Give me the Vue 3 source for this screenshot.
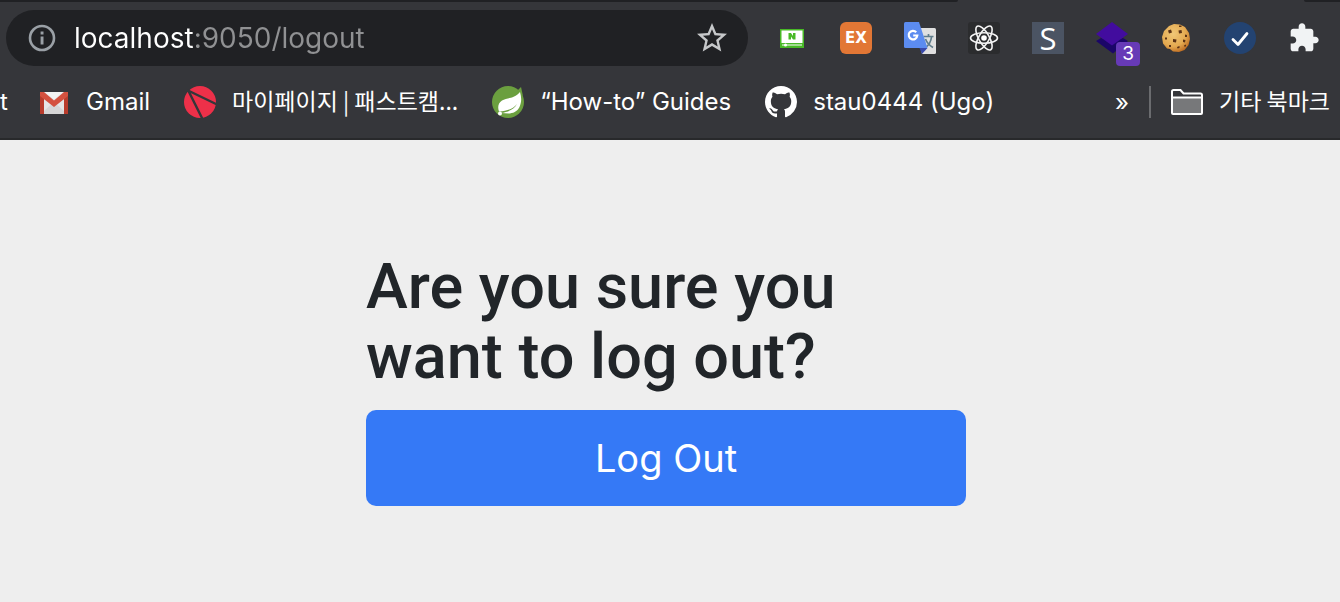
<script setup>
import { ref } from 'vue'

const address = ref('localhost:9050/logout')
</script>

<template>
  <div class="window">
    <header class="chrome">
      <div class="tabstrip"><span class="tabs-left"></span><span class="tabs-right"></span></div>

      <div class="toolbar">
        <div class="omnibox">
          <button class="icon-button" type="button" aria-label="Site information">
            <svg width="28" height="28" viewBox="0 0 28 28">
              <circle cx="14" cy="14" r="12" fill="none" stroke="#9aa0a6" stroke-width="2.6" />
              <path d="M12.6 7.5h2.9v3h-2.9zM12.6 12.5h2.9v8h-2.9z" fill="#9aa0a6" />
            </svg>
          </button>
          <input v-model="address" class="address" type="text" aria-label="Address" spellcheck="false" />
          <button class="icon-button" type="button" aria-label="Bookmark this page">
            <svg width="36" height="36" viewBox="0 0 24 24">
              <path fill="#c6c8ca" d="M22 9.24l-7.19-.62L12 2 9.19 8.63 2 9.24l5.46 4.73L5.82 21 12 17.27 18.18 21l-1.63-7.03L22 9.24zM12 15.4l-3.76 2.27 1-4.28-3.32-2.88 4.38-.38L12 6.1l1.71 4.04 4.38.38-3.32 2.88 1 4.28L12 15.4z" />
            </svg>
          </button>
        </div>

        <div class="extensions">
          <button class="icon-button" type="button" aria-label="Video extension">
            <svg width="32" height="32" viewBox="0 0 32 32">
              <path fill="#48b926" d="M4 7h24v19H4z" />
              <path fill="#fff" d="M5.500 8.500h21v12.500h-21zM6 22.500h20v1H6z" />
              <path fill="#48b926" d="M12.500 11h2.500l2 3v-3h2.500v6.500h-2.500l-2-3v3h-2.500z" />
              <circle cx="9.500" cy="23" r="1.500" fill="#fff" />
            </svg>
          </button>
          <button class="icon-button ex" type="button">EX</button>
          <button class="icon-button" type="button" aria-label="Translate">
            <svg width="32" height="32" viewBox="0 0 32 32">
              <path fill="#e0e0e0" d="M12 6h18.500q1.500 0 1.500 1.500v23q0 1.500-1.500 1.500H18z" />
              <path fill="none" stroke="#607d8b" stroke-width="1.700" d="M19.500 14.500h10M24.500 12v2.500M21 26c3.500-2.500 6-6 6.500-11M21.500 17c1.500 4 4 6.500 7.500 8.500" />
              <path fill="#3949ab" d="M15.500 26h8L18 32z" />
              <path fill="#5c8cf0" d="M1.500 0H15l8.500 26h-22Q0 26 0 24.500v-23Q0 0 1.500 0z" />
              <path fill="none" stroke="#fff" stroke-width="2.200" d="M12.200 10.200A4.300 4.300 0 1 0 13.300 13.500H9.200" />
            </svg>
          </button>
          <button class="icon-button" type="button" aria-label="React developer tools">
            <svg width="32" height="32" viewBox="0 0 32 32">
              <rect width="32" height="32" rx="3" fill="#2b2c2e" />
              <g fill="none" stroke="#f4f4f4" stroke-width="1.600">
                <ellipse cx="16" cy="16" rx="13.500" ry="5.200" />
                <ellipse cx="16" cy="16" rx="13.500" ry="5.200" transform="rotate(60 16 16)" />
                <ellipse cx="16" cy="16" rx="13.500" ry="5.200" transform="rotate(120 16 16)" />
              </g>
              <circle cx="16" cy="16" r="2.800" fill="#fff" />
            </svg>
          </button>
          <button class="icon-button s-tile" type="button">S</button>
          <button class="icon-button badge-host" type="button" aria-label="Layers, 3 items">
            <svg width="32" height="32" viewBox="0 0 32 32">
              <path fill="#1b0668" d="M0 19l5-3 11 4 11-4 5 3-15 12.500z" />
              <path fill="#420c9e" d="M16 0l16 12-16 11.500L0 12z" />
            </svg>
            <span class="badge">3</span>
          </button>
          <button class="icon-button" type="button" aria-label="Cookies">
            <svg width="32" height="32" viewBox="0 0 32 32">
              <defs>
                <radialGradient id="cookie" cx=".4" cy=".35" r=".7">
                  <stop offset="0" stop-color="#f0c777" />
                  <stop offset=".65" stop-color="#e4a950" />
                  <stop offset="1" stop-color="#bd6a20" />
                </radialGradient>
              </defs>
              <path fill="url(#cookie)" d="M9 4l5-2 6 .5 5 2.500 4 6 1 6-1.500 6-4 5-5.500 2-6-.5-3-2.500-3-.5-4-5L2 15l2-6z" />
              <g fill="#5b3215">
                <path d="M8 8.500l3-1 1 3-3 1zM18.500 8.500l3-.5.5 3-3 .5zM13 17l3.500.5-.5 3-3-.5zM5 15.500h2v2H5zM25 12.500l2 .5v2h-2zM23 17.500l2.500.5-.5 2.500-2-.5zM9 23h2v2H9zM17 25l2.500-1v2l-2 .5zM24 23.500l2-1v2h-2zM19 3.500h2.500V5h-2.500z" />
              </g>
            </svg>
          </button>
          <button class="icon-button" type="button" aria-label="Checker">
            <svg width="32" height="32" viewBox="0 0 32 32">
              <circle cx="16" cy="16" r="16" fill="#234371" />
              <path d="M9 17.500l5 5L23 11.500" fill="none" stroke="#fff" stroke-width="2.800" stroke-linecap="round" stroke-linejoin="round" />
            </svg>
          </button>
          <button class="icon-button" type="button" aria-label="Extensions">
            <svg width="32" height="32" viewBox="0 0 24 24">
              <path fill="#f1f3f4" d="M20.500 11H19V7c0-1.100-.9-2-2-2h-4V3.500C13 2.120 11.880 1 10.500 1S8 2.120 8 3.500V5H4c-1.100 0-1.990.9-1.990 2v3.800H3.500c1.490 0 2.700 1.210 2.700 2.700s-1.210 2.700-2.700 2.700H2V20c0 1.100.9 2 2 2h3.800v-1.500c0-1.490 1.210-2.700 2.700-2.700 1.490 0 2.700 1.210 2.700 2.700V22H17c1.100 0 2-.9 2-2v-4h1.500c1.380 0 2.500-1.120 2.500-2.500S21.880 11 20.500 11z" />
            </svg>
          </button>
        </div>
      </div>

      <nav class="bookmarks" aria-label="Bookmarks">
        <a class="bookmark first" href="#">t</a>
        <a class="bookmark" href="#">
          <svg width="32" height="32" viewBox="0 0 32 32">
            <path fill="#e6e6e6" d="M2 6h28v22H2z" />
            <path fill="#cfcfcf" d="M6 25l10-9 10 9v3H6z" opacity=".7" />
            <path fill="#b93d2d" d="M2 6h4v22H2zM26 6h4v22h-4z" />
            <path fill="#d4513f" d="M2 6h4l10 8.500L26 6h4v4L16 21 2 10z" />
            <path fill="#f3f3f3" d="M7 6h18l-9 7.500z" />
          </svg>
          <span>Gmail</span>
        </a>
        <a class="bookmark" href="#">
          <svg width="32" height="32" viewBox="0 0 32 32">
            <circle cx="16" cy="16" r="16" fill="#ed3049" />
            <path d="M3 4L33 18.500M4 4l15 30" stroke="#35363a" stroke-width="2.400" />
          </svg>
          <span class="korean">마이페이지 | 패스트캠...</span>
        </a>
        <a class="bookmark" href="#">
          <svg width="32" height="32" viewBox="0 0 32 32">
            <circle cx="16" cy="16" r="16" fill="#6b9f3f" />
            <path fill="#6b9f3f" d="M25 5l4-4 2 9z" />
            <path fill="#fff" d="M28 6c1.500 5 1.800 10-.5 15-2 4.500-7 6.500-11 6.500l-7.500-.5c7-1 13-3.500 16-9-4 5-10 7-18 7.500-1.500-4-1-8.500 3-11 5-3 12.500-1.500 18-8.500z" />
            <circle cx="8" cy="27.500" r="2" fill="#fff" />
          </svg>
          <span>“How-to” Guides</span>
        </a>
        <a class="bookmark" href="#">
          <svg width="32" height="32" viewBox="0 0 16 16">
            <path fill="#fff" d="M8 0C3.580 0 0 3.580 0 8c0 3.540 2.290 6.530 5.470 7.590.4.07.55-.17.55-.38 0-.19-.01-.82-.01-1.490-2.010.37-2.530-.49-2.690-.94-.09-.23-.48-.94-.82-1.130-.28-.15-.68-.52-.01-.53.63-.01 1.080.58 1.230.82.72 1.210 1.870.87 2.330.66.07-.52.28-.87.51-1.070-1.780-.2-3.640-.89-3.640-3.950 0-.87.31-1.590.82-2.150-.08-.2-.36-1.020.08-2.120 0 0 .67-.21 2.200.82.64-.18 1.320-.27 2-.27s1.360.09 2 .27c1.530-1.040 2.200-.82 2.200-.82.44 1.100.16 1.920.08 2.120.51.56.82 1.270.82 2.150 0 3.070-1.870 3.750-3.650 3.950.29.25.54.73.54 1.480 0 1.070-.01 1.930-.01 2.200 0 .21.15.46.55.38A8.010 8.010 0 0 0 16 8c0-4.420-3.580-8-8-8z" />
          </svg>
          <span>stau0444 (Ugo)</span>
        </a>
        <button class="icon-button more" type="button" aria-label="More bookmarks">»</button>
        <span class="divider"></span>
        <a class="bookmark" href="#">
          <svg width="32" height="32" viewBox="0 0 32 32">
            <path d="M1 27V5.500Q1 4 2.500 4h7l3 3.500h17q1.500 0 1.500 1.500v18q0 1-1 1H2q-1 0-1-1z" fill="#35363a" stroke="#fff" stroke-width="2" />
            <path d="M2 12h28v15H2z" fill="#77787a" />
            <path d="M1 11.500h30" stroke="#fff" stroke-width="2" />
          </svg>
          <span class="korean">기타 북마크</span>
        </a>
      </nav>
    </header>

    <main class="page">
      <form class="logout" @submit.prevent>
        <h1>Are you sure you want to log out?</h1>
        <button class="submit" type="submit">Log Out</button>
      </form>
    </main>
  </div>
</template>

<style>
body {
  margin: 0;
  background: #eee;
}
</style>

<style scoped>
.window {
  font-family: Inter, Roboto, "Noto Sans CJK KR", sans-serif;
  min-height: 100vh;
  overflow: hidden;
  background: #eee;
}

.chrome {
  background: #35363a;
  border-bottom: 2px solid #28292b;
  color: #fff;
}

.tabstrip {
  display: flex;
  justify-content: space-between;
  height: 2px;
}

.tabs-left {
  width: 958px;
  background: #202124;
  border-bottom-right-radius: 4px;
}

.tabs-right {
  width: 36px;
  background: #202124;
  border-bottom-left-radius: 4px;
}

.toolbar {
  display: flex;
  align-items: center;
  gap: 28px;
  padding: 8px 20px 0 6px;
}

.omnibox {
  display: flex;
  flex: 1;
  align-items: center;
  box-sizing: border-box;
  min-width: 0;
  height: 56px;
  gap: 18px;
  padding: 0 18px 0 22px;
  border-radius: 28px;
  background: #202124;
}

.icon-button {
  display: flex;
  flex: none;
  align-items: center;
  justify-content: center;
  padding: 0;
  border: 0;
  background: none;
  color: #fff;
  font-family: inherit;
}

.address {
  flex: 1;
  min-width: 0;
  height: 40px;
  padding: 0;
  border: 0;
  outline: 0;
  background: linear-gradient(to right, #fff 121px, #909193 121px);
  background-clip: text;
  -webkit-background-clip: text;
  -webkit-text-fill-color: transparent;
  color: #fff;
  font-family: inherit;
  font-size: 28px;
}

.extensions {
  display: flex;
  flex: none;
  gap: 32px;
}

.extensions .icon-button {
  width: 32px;
  height: 32px;
}

.extensions .ex {
  border-radius: 6px;
  background: #e27735;
  font-family: "DejaVu Sans", sans-serif;
  font-size: 15px;
  font-weight: 700;
}

.extensions .s-tile {
  background: #4b5463;
  font-family: "Open Sans", sans-serif;
  font-size: 31px;
  line-height: 32px;
}

.badge-host {
  position: relative;
}

.badge {
  position: absolute;
  top: 20px;
  left: 20px;
  width: 24px;
  height: 24px;
  border-radius: 4px;
  background: #673ab7;
  font-size: 19px;
  line-height: 24px;
  text-align: center;
}

.bookmarks {
  display: flex;
  align-items: center;
  gap: 34px;
  height: 72px;
  padding-right: 10px;
}

.bookmark {
  display: flex;
  flex: none;
  align-items: center;
  gap: 16px;
  color: #fff;
  font-size: 24px;
  line-height: 32px;
  text-decoration: none;
  white-space: nowrap;
}

.first {
  width: 9px;
  margin-right: -5px;
}

.korean {
  padding-bottom: 4px;
  font-family: "Noto Sans CJK KR", sans-serif;
  font-size: 23px;
  line-height: 28px;
}

.more {
  margin-left: auto;
  margin-right: -14px;
  font-size: 24px;
}

.divider {
  width: 2px;
  height: 32px;
  margin-right: -14px;
  background: #6b6c6f;
}

.page {
  padding: 112px 8px 0 0;
}

.logout {
  width: 600px;
  max-width: 100%;
  margin: 0 auto;
}

h1 {
  margin: 0 0 18px;
  color: #212529;
  font-family: Roboto, sans-serif;
  font-size: 63px;
  font-weight: 500;
  line-height: 70px;
}

.submit {
  display: block;
  width: 100%;
  height: 96px;
  border: 0;
  border-radius: 10px;
  background: #3579f6;
  color: #fff;
  font-family: inherit;
  font-size: 38px;
}
</style>
